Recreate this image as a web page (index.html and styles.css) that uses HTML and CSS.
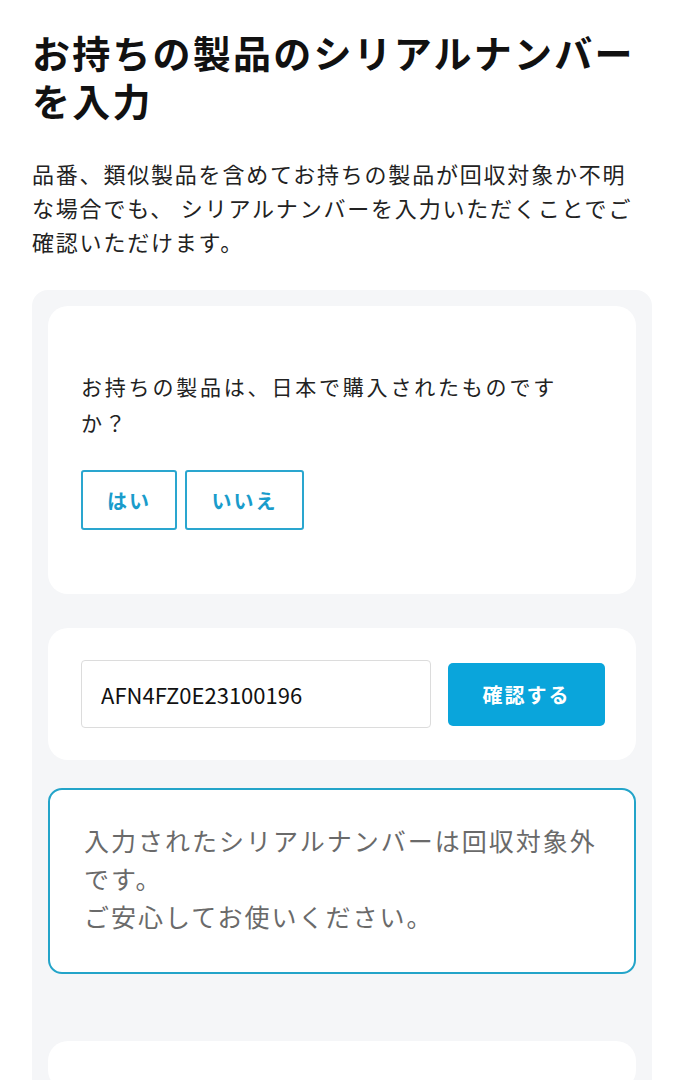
FILE: index.html
```html
<!DOCTYPE html>
<html lang="ja">
<head>
<meta charset="utf-8">
<title>シリアルナンバーを入力</title>
<link rel="stylesheet" href="styles.css">
</head>
<body>
<main class="page">
  <h1 class="title">お持ちの製品のシリアルナンバーを入力</h1>
  <p class="lead">品番、類似製品を含めてお持ちの製品が回収対象か不明な場合でも、 シリアルナンバーを入力いただくことでご確認いただけます。</p>
  <section class="panel">
    <div class="card card-question">
      <p class="question">お持ちの製品は、日本で購入されたものですか？</p>
      <div class="choices">
        <button class="choice choice-yes" type="button">はい</button>
        <button class="choice choice-no" type="button">いいえ</button>
      </div>
    </div>
    <div class="card card-serial">
      <input class="serial-input" type="text" value="AFN4FZ0E23100196">
      <button class="confirm" type="button">確認する</button>
    </div>
    <div class="result">
      <p class="result-text">入力されたシリアルナンバーは回収対象外です。<br>ご安心してお使いください。</p>
    </div>
    <div class="card card-next"></div>
  </section>
</main>
</body>
</html>
```
FILE: styles.css
```css
* { box-sizing: border-box; }
html, body { margin: 0; padding: 0; background: #ffffff; }
body {
  font-family: "Noto Sans CJK JP", "Noto Sans", sans-serif;
  color: #1a1a1a;
}
.page {
  padding: 28px 38px 0 32px;
}
.title {
  margin: 0;
  font-size: 38px;
  line-height: 48px;
  font-weight: 700;
  letter-spacing: 2.2px;
  color: #111;
}
.lead {
  margin: 32px 12px 0 0;
  font-size: 22px;
  line-height: 34px;
  letter-spacing: 1.8px;
  color: #222;
}
.panel {
  margin-top: 32px;
  background: #f5f6f8;
  border-radius: 16px 16px 0 0;
  padding: 16px 16px 0;
  display: flex;
  flex-direction: column;
  height: 800px;
}
.card {
  background: #ffffff;
  border-radius: 20px;
}
.card-question {
  padding: 62px 33px 64px;
}
.question {
  margin: 0;
  max-width: 495px;
  font-size: 21px;
  line-height: 36px;
  letter-spacing: 2.8px;
  color: #222;
}
.choices {
  margin-top: 30px;
  display: flex;
  gap: 8px;
}
.choice {
  height: 60px;
  background: #fff;
  border: 2px solid #2aa6cf;
  border-radius: 3px;
  color: #1a9ccb;
  font-family: inherit;
  font-size: 20px;
  font-weight: 700;
  letter-spacing: 2px;
  padding: 0;
}
.choice-yes { width: 96px; }
.choice-no { width: 119px; }
.card-serial {
  margin-top: 34px;
  padding: 32px 31px 32px 33px;
  display: flex;
  align-items: center;
  gap: 17px;
}
.serial-input {
  width: 350px;
  height: 68px;
  border: 1px solid #dcdcdc;
  border-radius: 4px;
  padding: 0 19px;
  font-family: inherit;
  font-size: 22px;
  color: #111;
  background: #fff;
  outline: none;
}
.confirm {
  flex: 1;
  height: 63px;
  background: #0aa5db;
  color: #fff;
  border: none;
  border-radius: 5px;
  font-family: inherit;
  font-size: 20px;
  font-weight: 700;
  letter-spacing: 2px;
}
.result {
  margin-top: 28px;
  border: 2px solid #23a4c9;
  border-radius: 14px;
  background: #fff;
  padding: 31px 34px 37px;
}
.result-text {
  margin: 0;
  font-size: 25px;
  line-height: 38px;
  letter-spacing: 2px;
  color: #6a6a6a;
}
.card-next {
  margin-top: 67px;
  height: 200px;
}
```
